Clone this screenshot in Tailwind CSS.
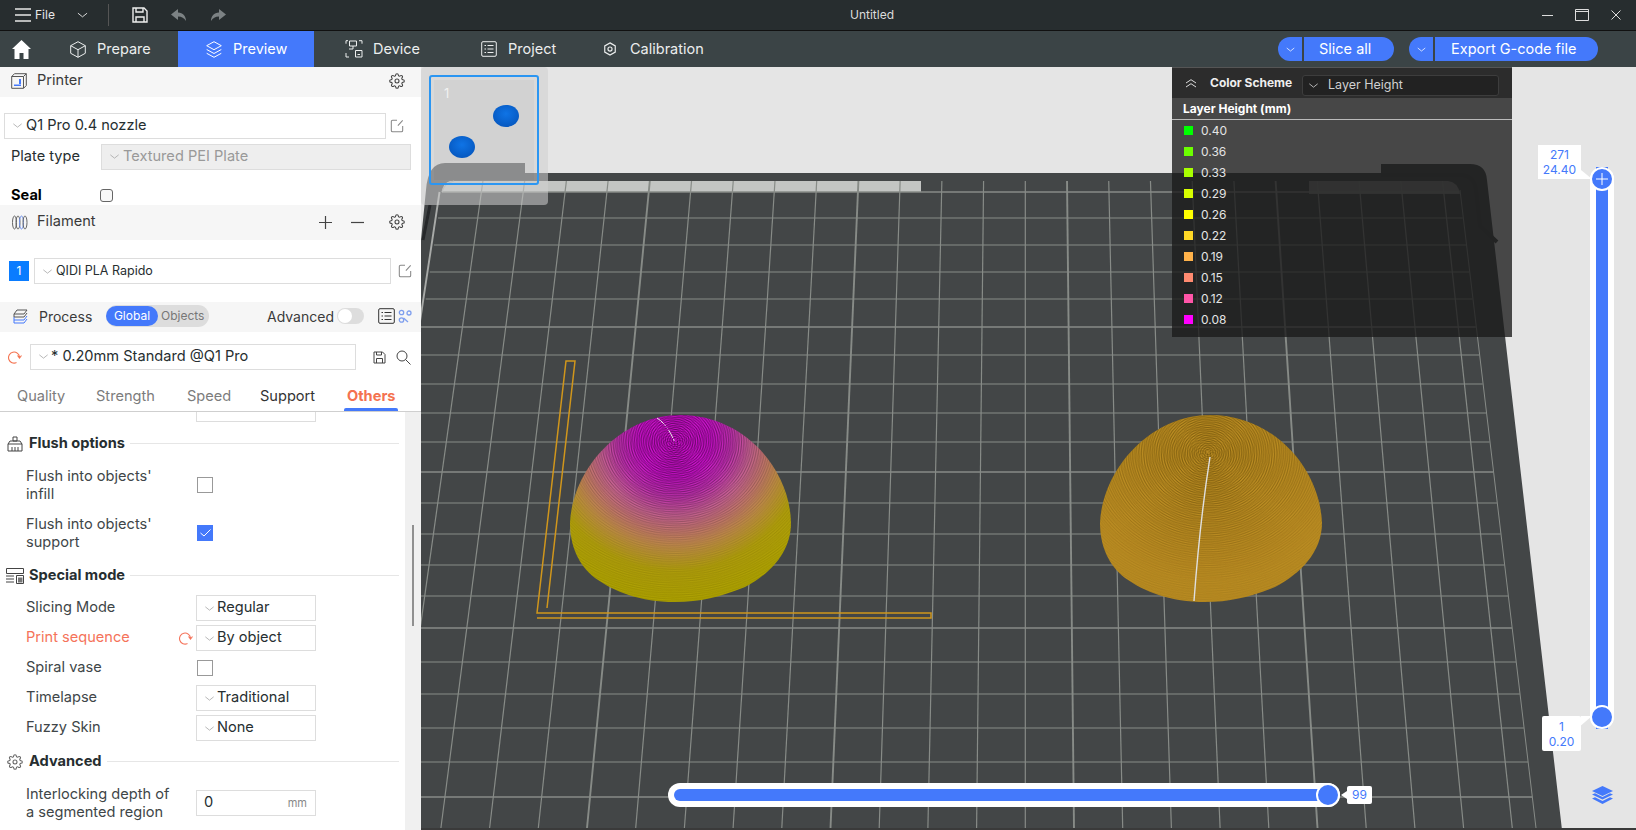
<!DOCTYPE html>
<html lang="en">
<head>
  <meta charset="UTF-8">
  <title>Untitled</title>
  <script src="https://cdn.jsdelivr.net/npm/@tailwindcss/browser@4"></script>
</head>
<body class="w-[1636px] h-[830px] overflow-hidden bg-white [font-family:'Inter',sans-serif]">

  <!-- shared icons -->
  <svg width="0" height="0" class="absolute">
    <symbol id="i-chev" viewBox="0 0 12 6"><path d="M1 1l5 4 5-4" fill="none" stroke="currentColor" stroke-width="1"/></symbol>
    <symbol id="i-edit" viewBox="0 0 16 16"><path d="M8 1.500H3a1.500 1.500 0 0 0-1.500 1.500v10A1.500 1.500 0 0 0 3 14.500h10a1.500 1.500 0 0 0 1.500-1.500V8M9 7.500l5.500-6" fill="none" stroke="currentColor" stroke-width="1.200"/></symbol>
    <symbol id="i-gear" viewBox="0 0 24 24"><g fill="none" stroke="currentColor" stroke-width="1.600"><circle cx="12" cy="12" r="3"/><path d="M19.400 15a1.650 1.650 0 0 0 .33 1.820l.06.06a2 2 0 0 1 0 2.830 2 2 0 0 1-2.830 0l-.06-.06a1.650 1.650 0 0 0-1.820-.33 1.650 1.650 0 0 0-1 1.510V21a2 2 0 0 1-2 2 2 2 0 0 1-2-2v-.09A1.650 1.650 0 0 0 9 19.400a1.650 1.650 0 0 0-1.820.33l-.06.06a2 2 0 0 1-2.830 0 2 2 0 0 1 0-2.830l.06-.06a1.650 1.650 0 0 0 .33-1.820 1.650 1.650 0 0 0-1.510-1H3a2 2 0 0 1-2-2 2 2 0 0 1 2-2h.09A1.650 1.650 0 0 0 4.600 9a1.650 1.650 0 0 0-.33-1.820l-.06-.06a2 2 0 0 1 0-2.830 2 2 0 0 1 2.830 0l.06.06a1.650 1.650 0 0 0 1.820.33H9a1.650 1.650 0 0 0 1-1.510V3a2 2 0 0 1 2-2 2 2 0 0 1 2 2v.09a1.650 1.650 0 0 0 1 1.510 1.650 1.650 0 0 0 1.820-.33l.06-.06a2 2 0 0 1 2.830 0 2 2 0 0 1 0 2.830l-.06.06a1.650 1.650 0 0 0-.33 1.820V9a1.650 1.650 0 0 0 1.510 1H21a2 2 0 0 1 2 2 2 2 0 0 1-2 2h-.09a1.650 1.650 0 0 0-1.510 1z"/></g></symbol>
    <symbol id="i-reset" viewBox="0 0 15 14"><path d="M9.500 12.500A5.500 5.500 0 1 1 12.500 7M10.500 5.500l2 2.500 2-2.500" fill="none" stroke="currentColor" stroke-width="1.100"/></symbol>
  </svg>

  <!-- title bar -->
  <header class="h-[31px] bg-[#272d2f] border-b border-[#111] flex items-center text-[#e8e8e8] relative">
    <svg class="ml-[15px] w-[16px] h-[14px]" viewBox="0 0 16 14"><path d="M0 1h16M0 7h16M0 13h16" stroke="currentColor" stroke-width="1.400"/></svg>
    <span class="ml-[4px] text-[12px]">File</span>
    <svg class="ml-[22px] w-[11px] h-[6px]"><use href="#i-chev"/></svg>
    <div class="ml-[20px] w-px h-[22px] bg-[#555]"></div>
    <svg class="ml-[23px] w-[16px] h-[16px]" viewBox="0 0 16 16"><path d="M1 1h11l3 3v11H1zM4 1v4h7V1M4 15v-5h8v5" fill="none" stroke="#eee" stroke-width="1.400"/></svg>
    <svg class="ml-[23px] w-[16px] h-[13px]" viewBox="0 0 16 13"><path d="M7 0L0 5.500 7 11V7.500c4 0 6 1.500 8 4.500 0-5-3-8-8-8.500z" fill="#7c8284"/></svg>
    <svg class="ml-[23px] w-[16px] h-[13px]" viewBox="0 0 16 13"><path d="M9 0l7 5.500L9 11V7.500c-4 0-6 1.500-8 4.500 0-5 3-8 8-8.500z" fill="#7c8284"/></svg>
    <span class="absolute left-[850px] text-[12px] text-[#dcdcdc]">Untitled</span>
    <div class="ml-auto flex items-center text-[#ddd]">
      <svg class="w-[11px] h-[11px]" viewBox="0 0 11 11"><path d="M0 5.500h11" stroke="currentColor" stroke-width="1"/></svg>
      <svg class="ml-[22px] w-[14px] h-[12px]" viewBox="0 0 14 12"><path d="M.5.500h13v11H.5zM.5 2.500h13" fill="none" stroke="currentColor" stroke-width="1"/></svg>
      <svg class="ml-[22px] mr-[15px] w-[10px] h-[10px]" viewBox="0 0 10 10"><path d="M.5.500l9 9M9.500.500l-9 9" stroke="currentColor" stroke-width="1"/></svg>
    </div>
  </header>

  <!-- top nav -->
  <nav class="h-[36px] bg-[#3b4446] flex items-stretch text-[#eceeee] text-[14.5px]">
    <div class="w-[48px] pl-[12px] flex items-center">
      <svg class="w-[19px] h-[19px]" viewBox="0 0 19 19"><path d="M9.500 0L19 9h-2.500v10h-5v-6h-4v6h-5V9H0z" fill="#fff"/></svg>
    </div>
    <a class="w-[130px] pl-[22px] flex items-center">
      <svg class="w-[16px] h-[17px] mr-[11px]" viewBox="0 0 16 17"><path d="M8 .7l7.300 4v7.600L8 16.300.7 12.300V4.700zM.7 4.700L8 8.700l7.300-4M8 8.700v7.600" fill="none" stroke="currentColor" stroke-width="1"/></svg>Prepare
    </a>
    <a class="w-[136px] pl-[28px] flex items-center bg-[#4479fb] text-white">
      <svg class="w-[16px] h-[17px] mr-[11px]" viewBox="0 0 16 17"><path d="M8 .7l7.300 4L8 8.700.7 4.700zM.7 8.500L8 12.500l7.300-4M.7 12.300L8 16.300l7.300-4" fill="none" stroke="currentColor" stroke-width="1"/></svg>Preview
    </a>
    <a class="w-[136px] pl-[31px] flex items-center">
      <svg class="w-[18px] h-[18px] mr-[10px]" viewBox="0 0 18 18"><path d="M1 .7h2M1 .7v3M14 .7h3v3M1 13v4h3M4.500 1h7v5h-7zM8 6v3M4 9h4M10.500 10.500h6.500v6.500h-6.500zM12.500 14.500h2.500" fill="none" stroke="currentColor" stroke-width="1"/></svg>Device
    </a>
    <a class="w-[138px] pl-[31px] flex items-center">
      <svg class="w-[16px] h-[16px] mr-[11px]" viewBox="0 0 16 16"><path d="M2 .7h12A1.300 1.300 0 0 1 15.300 2v12a1.300 1.300 0 0 1-1.300 1.300H2A1.300 1.300 0 0 1 .7 14V2A1.300 1.300 0 0 1 2 .7zM3.500 4.500h1.500M6.500 4.500h6M3.500 8h1.500M6.500 8h6M3.500 11.500h1.500M6.500 11.500h6" fill="none" stroke="currentColor" stroke-width="1"/></svg>Project
    </a>
    <a class="pl-[15px] flex items-center">
      <svg class="w-[14px] h-[14px] mr-[13px]" viewBox="0 0 24 24"><path d="M12 1.500l9 5.200v10.600l-9 5.200-9-5.200V6.700z" fill="none" stroke="currentColor" stroke-width="2"/><circle cx="12" cy="12" r="3.500" fill="none" stroke="currentColor" stroke-width="2"/></svg>Calibration
    </a>
    <div class="ml-auto mr-[38px] flex items-center text-white">
      <span class="w-[24px] h-[24px] bg-[#4479fb] rounded-l-[12px] flex items-center justify-center"><svg class="w-[9px] h-[5px]"><use href="#i-chev"/></svg></span>
      <span class="ml-[2px] w-[90px] h-[24px] bg-[#4479fb] rounded-r-[12px] flex items-center pl-[15px]">Slice all</span>
      <span class="ml-[15px] w-[24px] h-[24px] bg-[#4479fb] rounded-l-[12px] flex items-center justify-center"><svg class="w-[9px] h-[5px]"><use href="#i-chev"/></svg></span>
      <span class="ml-[2px] w-[163px] h-[24px] bg-[#4479fb] rounded-r-[12px] flex items-center pl-[16px]">Export G-code file</span>
    </div>
  </nav>

  <main class="h-[763px] flex">
    <!-- left panel -->
    <aside class="w-[421px] shrink-0 flex flex-col text-[14.6px] text-[#262e30] bg-white">
      <!-- printer -->
      <div class="h-[30px] pb-[2px] bg-[#f6f6f6] flex items-center pl-[11px] pr-[16px] text-[#3a3a3a]">
        <svg class="w-[16px] h-[16px] mr-[10px]" viewBox="0 0 16 16"><path d="M.7 3.500L3.500.7h11.800v11.800l-2.800 2.800H.7zM.7 3.500h11.800v11.800M12.500 3.500l2.800-2.800" fill="none" stroke="#555" stroke-width="1"/><path d="M3 11.500h7v1.500H3zM8 6h2v5H8z" fill="#4479fb"/></svg>
        Printer
        <svg class="ml-auto w-[16px] h-[16px] text-[#444]"><use href="#i-gear"/></svg>
      </div>
      <div class="h-[108px]">
        <div class="mt-[16px] flex items-center pl-[4px]">
          <div class="w-[382px] h-[26px] pb-[1px] border border-[#ddd] flex items-center pl-[7px]">
            <svg class="w-[11px] h-[5px] mr-[3px] text-[#aaa]"><use href="#i-chev"/></svg>Q1 Pro 0.4 nozzle
          </div>
          <svg class="ml-[4px] w-[14px] h-[14px] text-[#888]"><use href="#i-edit"/></svg>
        </div>
        <div class="mt-[5px] flex items-center pl-[11px]">
          <span class="w-[90px] pb-[1px]">Plate type</span>
          <div class="w-[310px] h-[26px] pb-[1px] bg-[#eeeeee] border border-[#dddddd] flex items-center pl-[7px] text-[#999]">
            <svg class="w-[11px] h-[5px] mr-[3px] text-[#aaa]"><use href="#i-chev"/></svg>Textured PEI Plate
          </div>
        </div>
        <div class="mt-[16px] flex items-center pl-[11px] h-[19px]">
          <b class="w-[89px] font-bold text-black">Seal</b>
          <span class="w-[13px] h-[13px] border border-[#666] rounded-[3px] bg-[#f8f8f8]"></span>
        </div>
      </div>

      <!-- filament -->
      <div class="h-[35px] pb-[1px] bg-[#f6f6f6] flex items-center pl-[12px] pr-[16px] text-[#3a3a3a]">
        <svg class="w-[16px] h-[15px] mr-[9px]" viewBox="0 0 16 15"><g fill="none" stroke-width="1"><ellipse cx="2.500" cy="7.500" rx="2" ry="6.500" stroke="#666"/><ellipse cx="6" cy="7.500" rx="2" ry="6.500" stroke="#666"/><ellipse cx="9.500" cy="7.500" rx="2" ry="6.500" stroke="#6d8fe8"/><ellipse cx="13" cy="7.500" rx="2" ry="6.500" stroke="#666"/></g></svg>
        Filament
        <svg class="ml-auto w-[13px] h-[13px]" viewBox="0 0 13 13"><path d="M6.500 0v13M0 6.500h13" stroke="#444" stroke-width="1.200"/></svg>
        <svg class="ml-[19px] w-[13px] h-[13px]" viewBox="0 0 13 13"><path d="M0 6.500h13" stroke="#444" stroke-width="1.200"/></svg>
        <svg class="ml-[25px] w-[16px] h-[16px] text-[#444]"><use href="#i-gear"/></svg>
      </div>
      <div class="h-[62px] flex items-center pl-[9px]">
        <span class="w-[20px] h-[20px] bg-[#0a7cff] text-white text-[12px] flex items-center justify-center">1</span>
        <div class="ml-[5px] w-[357px] h-[26px] border border-[#ddd] flex items-center pl-[7px] text-[12.5px]">
          <svg class="w-[11px] h-[5px] mr-[3px] text-[#aaa]"><use href="#i-chev"/></svg>QIDI PLA Rapido
        </div>
        <svg class="ml-[7px] w-[14px] h-[14px] text-[#888]"><use href="#i-edit"/></svg>
      </div>

      <!-- process -->
      <div class="h-[30px] pb-[2px] bg-[#f6f6f6] flex items-center pl-[13px] text-[14px] text-[#3a3a3a]">
        <svg class="w-[15px] h-[15px] mr-[11px]" viewBox="0 0 15 15"><path d="M4 1h10l-3 4H1zM1 5v3h10l3-4" fill="none" stroke="#555" stroke-width="1"/><path d="M1 8v3h10l3-4M1 11v3h10l3-4" fill="none" stroke="#4479fb" stroke-width="1"/></svg>
        <span class="w-[52px]">Process</span>
        <div class="ml-[15px] w-[103px] h-[22px] rounded-full bg-[#dddddd] flex items-center text-[12px]">
          <span class="w-[52px] h-[20px] rounded-full bg-[#4479fb] text-white flex items-center justify-center">Global</span>
          <span class="ml-[3px] text-[#777]">Objects</span>
        </div>
        <span class="ml-[58px] w-[67px]">Advanced</span>
        <span class="ml-[3px] w-[27px] h-[16px] rounded-full bg-[#dddddd] flex items-center pl-[1px]"><span class="w-[14px] h-[14px] rounded-full bg-white"></span></span>
        <svg class="ml-[14px] w-[17px] h-[16px]" viewBox="0 0 17 16"><path d="M2 .7h13A1.300 1.300 0 0 1 16.300 2v12a1.300 1.300 0 0 1-1.300 1.300H2A1.300 1.300 0 0 1 .7 14V2A1.300 1.300 0 0 1 2 .7zM3.500 4.500h1.500M6.500 4.500h7M3.500 8h1.500M6.500 8h7M3.500 11.500h1.500M6.500 11.500h7" fill="none" stroke="#333" stroke-width="1"/></svg>
        <svg class="ml-[3px] w-[14px] h-[14px]" viewBox="0 0 14 14"><g fill="none" stroke="#7f9fee" stroke-width="1.300"><circle cx="3.500" cy="3.500" r="2.200"/><circle cx="11" cy="4" r="2"/><circle cx="3.500" cy="11" r="2.200"/><path d="M5.500 9L10 13"/></g></svg>
      </div>
      <div class="h-[42px] pt-[8px] flex items-center pl-[7px]">
        <svg class="w-[15px] h-[14px] text-[#f4724f]"><use href="#i-reset"/></svg>
        <div class="ml-[8px] w-[326px] h-[26px] pb-[1px] border border-[#ddd] flex items-center pl-[7px]">
          <svg class="w-[11px] h-[5px] mr-[2px] text-[#aaa]"><use href="#i-chev"/></svg>* 0.20mm Standard @Q1 Pro
        </div>
        <svg class="ml-[17px] w-[13px] h-[13px]" viewBox="0 0 13 13"><path d="M1 1h8.500L12 3.500V12H1zM3.500 1v3h5V1M3.500 12V7.500h6V12" fill="none" stroke="#444" stroke-width="1"/></svg>
        <svg class="ml-[10px] w-[15px] h-[15px]" viewBox="0 0 15 15"><circle cx="6" cy="6" r="5" fill="none" stroke="#444" stroke-width="1"/><path d="M9.500 9.500L14.500 14.500" stroke="#444" stroke-width="1"/></svg>
      </div>

      <!-- tabs -->
      <div class="h-[38px] pt-[8px] border-b border-[#cfcfcf] flex items-center text-[#7c7c7c] relative">
        <span class="ml-[17px] w-[49px]">Quality</span>
        <span class="ml-[30px] w-[61px]">Strength</span>
        <span class="ml-[30px] w-[43px]">Speed</span>
        <span class="ml-[30px] w-[56px] text-[#333]">Support</span>
        <span class="ml-[31px] font-bold text-[#f4724f]">Others</span>
        <span class="absolute left-[344px] bottom-0 w-[54px] h-[3px] rounded-t-[2px] bg-[#4479fb]"></span>
      </div>

      <!-- settings list -->
      <div class="flex-1 flex overflow-hidden">
        <div class="flex-1 text-[#404648]">
          <div class="ml-[196px] w-[120px] h-[10px] border border-t-0 border-[#ddd]"></div>

          <div class="mt-[10px] h-[24px] pb-[1px] flex items-center pl-[7px] font-bold text-[#262e30]">
            <svg class="w-[16px] h-[16px] mr-[6px]" viewBox="0 0 16 16"><path d="M6 1h4v4H6zM1 8l2-3h10l2 3zM1 8v7h14V8M5 15v-4M8 15v-4M11 15v-4" fill="none" stroke="#444" stroke-width="1"/></svg>
            Flush options<span class="ml-[5px] flex-1 mr-[6px] h-px bg-[#e6e6e6]"></span>
          </div>
          <div class="mt-[11px] grid grid-cols-[196px_120px] items-center">
            <span class="pl-[26px] leading-[18px]">Flush into objects'<br>infill</span>
            <span class="ml-[1px] w-[16px] h-[16px] border border-[#999]"></span>
          </div>
          <div class="mt-[12px] grid grid-cols-[196px_120px] items-center">
            <span class="pl-[26px] leading-[18px]">Flush into objects'<br>support</span>
            <span class="ml-[1px] w-[16px] h-[16px] bg-[#4479fb] flex items-center justify-center"><svg class="w-[11px] h-[8px]" viewBox="0 0 11 8"><path d="M.5 4l3.500 3 6.500-6.500" fill="none" stroke="#fff" stroke-width="1"/></svg></span>
          </div>

          <div class="mt-[13px] h-[24px] pb-[1px] flex items-center pl-[6px] font-bold text-[#262e30]">
            <svg class="w-[18px] h-[16px] mr-[5px]" viewBox="0 0 18 16"><path d="M.5.500h17v5H.5zM10.500 7.500h7v8h-7z" fill="none" stroke="#444" stroke-width="1"/><path d="M12 9.500h4.500v5H12z" fill="#777"/><path d="M0 8h8M0 11h8M0 14h8" stroke="#444" stroke-width="1"/></svg>
            Special mode<span class="ml-[5px] flex-1 mr-[6px] h-px bg-[#e6e6e6]"></span>
          </div>
          <div class="mt-[7px] grid grid-cols-[196px_120px] items-center">
            <span class="pl-[26px]">Slicing Mode</span>
            <div class="h-[26px] border border-[#ddd] flex items-center pl-[7px] text-[#262e30]"><svg class="w-[11px] h-[5px] mr-[2px] text-[#aaa]"><use href="#i-chev"/></svg>Regular</div>
          </div>
          <div class="mt-[4px] grid grid-cols-[196px_120px] items-center">
            <span class="pl-[26px] pr-[3px] flex items-center justify-between text-[#f5735a]">Print sequence<svg class="w-[15px] h-[14px]"><use href="#i-reset"/></svg></span>
            <div class="h-[26px] border border-[#ddd] flex items-center pl-[7px] text-[#262e30]"><svg class="w-[11px] h-[5px] mr-[2px] text-[#aaa]"><use href="#i-chev"/></svg>By object</div>
          </div>
          <div class="mt-[4px] h-[26px] grid grid-cols-[196px_120px] items-center">
            <span class="pl-[26px]">Spiral vase</span>
            <span class="ml-[1px] w-[16px] h-[16px] border border-[#999]"></span>
          </div>
          <div class="mt-[4px] grid grid-cols-[196px_120px] items-center">
            <span class="pl-[26px]">Timelapse</span>
            <div class="h-[26px] border border-[#ddd] flex items-center pl-[7px] text-[#262e30]"><svg class="w-[11px] h-[5px] mr-[2px] text-[#aaa]"><use href="#i-chev"/></svg>Traditional</div>
          </div>
          <div class="mt-[4px] grid grid-cols-[196px_120px] items-center">
            <span class="pl-[26px]">Fuzzy Skin</span>
            <div class="h-[26px] border border-[#ddd] flex items-center pl-[7px] text-[#262e30]"><svg class="w-[11px] h-[5px] mr-[2px] text-[#aaa]"><use href="#i-chev"/></svg>None</div>
          </div>

          <div class="mt-[9px] h-[24px] pb-[1px] flex items-center pl-[7px] font-bold text-[#262e30]">
            <svg class="w-[16px] h-[16px] mr-[6px] text-[#666]" viewBox="0 0 24 24"><use href="#i-gear"/></svg>
            Advanced<span class="ml-[5px] flex-1 mr-[6px] h-px bg-[#e6e6e6]"></span>
          </div>
          <div class="mt-[11px] grid grid-cols-[196px_120px] items-center">
            <span class="pl-[26px] leading-[18px]">Interlocking depth of<br>a segmented region</span>
            <div class="h-[26px] border border-[#ddd] flex items-center px-[7px] text-[#262e30]">0<span class="ml-auto mr-[1px] text-[11px] text-[#888]">mm</span></div>
          </div>
        </div>
        <!-- scrollbar -->
        <div class="w-[16px] bg-[#f0f0f0] pt-[113px] pl-[7px]">
          <div class="w-[2px] h-[101px] bg-[#909090]"></div>
        </div>
      </div>
    </aside>

    <!-- 3d view -->
    <section class="relative flex-1 bg-[#e5e5e5] overflow-hidden">
      <svg id="scene" class="absolute inset-0 w-full h-full" viewBox="421 67 1215 763">
        <defs>
          <radialGradient id="dome-left" gradientUnits="userSpaceOnUse" cx="675" cy="440" r="168">
            <stop offset="0" stop-color="#cc0ecc"/>
            <stop offset=".22" stop-color="#c812c8"/>
            <stop offset=".33" stop-color="#c030b0"/>
            <stop offset=".45" stop-color="#c46090"/>
            <stop offset=".65" stop-color="#b98a40"/>
            <stop offset=".78" stop-color="#ae9c0c"/>
            <stop offset="1" stop-color="#ada200"/>
          </radialGradient>
          <radialGradient id="thumb-dome" cx=".5" cy=".4" r=".6">
            <stop offset="0" stop-color="#0f74e6"/>
            <stop offset="1" stop-color="#0658c0"/>
          </radialGradient>
          <path id="shape-left" d="M570 523C572 470 620 415 680 415C745 415 790 470 791 523C791 552 770 574 745 587C720 597 700 602 675 602C640 602 615 592 595 578C578 565 570 545 570 523Z"/>
          <path id="shape-right" d="M1100 523C1102 470 1150 415 1210 415C1275 415 1320 470 1322 523C1322 552 1300 574 1275 587C1250 597 1230 602 1205 602C1170 602 1145 592 1125 578C1108 565 1100 545 1100 523Z"/>
          <clipPath id="clip-left"><use href="#shape-left"/></clipPath>
          <clipPath id="clip-right"><use href="#shape-right"/></clipPath>
        </defs>

        <!-- bed -->
        <path d="M421 830V240L426 190Q428 163 445 163H525V173H1381V164H1470Q1486 164 1487 180L1562 830Z" fill="#434647"/>
        <path d="M430 205L423 240" stroke="#26282a" stroke-width="3"/>
        <path d="M1381 175H1462Q1474 176 1476 190L1480 226L1497 242" fill="none" stroke="#3d3f40" stroke-width="4"/>
        <path d="M450 181H921V192H442Q443 183 450 181Z" fill="#c3c5c3"/>
        <path d="M1309 181H1448Q1458 182 1460 194H1309Z" fill="#7e807e"/>
        <g id="grid"></g>

        <!-- wipe tower outline -->
        <path d="M547 608L575 361H566L537 613H931V618H537" fill="none" stroke="#d0961c" stroke-width="1.500"/>

        <!-- objects -->
        <use href="#shape-left" fill="url(#dome-left)"/>
        <g id="rings-left" clip-path="url(#clip-left)"></g>
        <path d="M657 418Q668 425 675 443" fill="none" stroke="#eee" stroke-width="1" stroke-dasharray="9 1 2 2 1 2"/>

        <use href="#shape-right" fill="#b98b22"/>
        <g id="rings-right" clip-path="url(#clip-right)"></g>
        <path d="M1210 457Q1200 520 1194 601" fill="none" stroke="#dfdfdf" stroke-width="1.400"/>

        <!-- slider pointers -->
        <path d="M1581 170L1592 179H1578Z" fill="#fff"/>
        <path d="M1581 716L1592 716L1578 728Z" fill="#fff"/>
        <path d="M1347 791L1341 795L1347 799Z" fill="#fff"/>
      </svg>

      <!-- plate thumbnail -->
      <div class="absolute left-0 top-0 w-[127px] h-[138px] bg-[#cfcfcf]/55 rounded-[4px]">
        <div class="absolute left-[8px] top-[8px] w-[110px] h-[110px] border-2 border-[#2b96f2] rounded-[3px] p-[3px]">
          <div class="relative w-full h-full bg-black/3 text-white/70 text-[13px] pl-[10px] pt-[4px]">1
            <svg class="absolute left-0 top-0 w-full h-full" viewBox="0 0 100 100">
              <path d="M59 36C59 30 64 25 72 25S85 30 85 36C85 42 79 47 72 47S59 42 59 36Z" fill="url(#thumb-dome)"/>
              <path d="M15 67C15 61 20 56 28 56S41 61 41 67C41 73 35 78 28 78S15 73 15 67Z" fill="url(#thumb-dome)"/>
            </svg>
          </div>
        </div>
      </div>

      <!-- legend -->
      <div class="absolute left-[751px] top-0 w-[340px] h-[270px] bg-[#1b1b1b]/78 text-[12px] text-[#e4e4e4] border-t border-[#555]">
        <div class="h-[30px] bg-[#2c2c2c] flex items-center pl-[13px]">
          <svg class="w-[12px] h-[9px]" viewBox="0 0 12 9"><path d="M1 4L6 .7l5 3.300M1 8L6 4.700l5 3.300" fill="none" stroke="#ddd" stroke-width="1"/></svg>
          <b class="ml-[13px] w-[83px] font-bold text-[#eee] whitespace-nowrap">Color Scheme</b>
          <div class="ml-[9px] w-[197px] h-[21px] mt-[5px] bg-[#222222] border border-[#3d3d3d] rounded-[3px] flex items-center pl-[5px] text-[12.5px] text-[#d0d0d0]">
            <svg class="w-[11px] h-[5px] mr-[9px]"><use href="#i-chev"/></svg>Layer Height
          </div>
        </div>
        <div class="h-[22px] border-b border-[#bbbbbb] pl-[11px] flex items-center font-bold text-white">Layer Height (mm)</div>
        <ul>
          <li class="h-[21px] flex items-center pl-[12px]"><span class="w-[9px] h-[9px] mr-[8px] bg-[#00ff00]"></span>0.40</li>
          <li class="h-[21px] flex items-center pl-[12px]"><span class="w-[9px] h-[9px] mr-[8px] bg-[#6cff00]"></span>0.36</li>
          <li class="h-[21px] flex items-center pl-[12px]"><span class="w-[9px] h-[9px] mr-[8px] bg-[#a8ff00]"></span>0.33</li>
          <li class="h-[21px] flex items-center pl-[12px]"><span class="w-[9px] h-[9px] mr-[8px] bg-[#d8ff00]"></span>0.29</li>
          <li class="h-[21px] flex items-center pl-[12px]"><span class="w-[9px] h-[9px] mr-[8px] bg-[#ffff00]"></span>0.26</li>
          <li class="h-[21px] flex items-center pl-[12px]"><span class="w-[9px] h-[9px] mr-[8px] bg-[#ffd826]"></span>0.22</li>
          <li class="h-[21px] flex items-center pl-[12px]"><span class="w-[9px] h-[9px] mr-[8px] bg-[#ffb24a]"></span>0.19</li>
          <li class="h-[21px] flex items-center pl-[12px]"><span class="w-[9px] h-[9px] mr-[8px] bg-[#ff8a70]"></span>0.15</li>
          <li class="h-[21px] flex items-center pl-[12px]"><span class="w-[9px] h-[9px] mr-[8px] bg-[#ff55a8]"></span>0.12</li>
          <li class="h-[21px] flex items-center pl-[12px]"><span class="w-[9px] h-[9px] mr-[8px] bg-[#ff00ff]"></span>0.08</li>
        </ul>
      </div>

      <!-- layer slider -->
      <div class="absolute left-[1117px] top-[78px] w-[43px] h-[34px] bg-white text-[#4479fb] text-[12px] leading-[15px] flex flex-col items-center justify-center">
        <span>271</span><span>24.40</span>
      </div>
      <div class="absolute left-[1169px] top-[100px] w-[24px] h-[562px] bg-white rounded-full flex justify-center">
        <div class="w-[12px] h-full bg-[#4479fb]"></div>
        <span class="absolute top-0 left-0 w-[24px] h-[24px] rounded-full bg-[#4479fb] border-2 border-white flex items-center justify-center">
          <svg class="w-[12px] h-[12px]" viewBox="0 0 12 12"><path d="M6 0v12M0 6h12" stroke="#fff" stroke-width="1"/></svg>
        </span>
        <span class="absolute bottom-0 left-0 w-[24px] h-[24px] rounded-full bg-[#4479fb] border-2 border-white"></span>
      </div>
      <div class="absolute left-[1121px] top-[649px] w-[39px] h-[35px] bg-white text-[#4479fb] text-[12px] leading-[15px] rounded-[2px] flex flex-col items-center justify-center">
        <span>1</span><span>0.20</span>
      </div>
      <svg class="absolute left-[1171px] top-[719px] w-[21px] h-[18px]" viewBox="0 0 21 18"><path d="M10.500 0L21 5l-10.500 5L0 5z" fill="#4479fb"/><path d="M0 8.500l3-1.200 7.500 3.600 7.500-3.600 3 1.200-10.500 5z" fill="#4479fb"/><path d="M0 12.500l3-1.200 7.500 3.600 7.500-3.600 3 1.200L10.500 18z" fill="#4479fb"/></svg>

      <!-- move slider -->
      <div class="absolute left-[247px] top-[716px] w-[672px] h-[24px] bg-white rounded-full flex items-center pl-[6px] pr-[6px]">
        <div class="w-full h-[12px] bg-[#4479fb] rounded-l-[6px]"></div>
        <span class="absolute right-0 top-0 w-[24px] h-[24px] rounded-full bg-[#4479fb] border-2 border-white"></span>
      </div>
      <div class="absolute left-[926px] top-[719px] w-[25px] h-[18px] bg-white rounded-[2px] text-[#4479fb] text-[12px] flex items-center justify-center">99</div>
    </section>
  </main>

  <script>
    // build bed grid and the layer rings of the two objects
    const NS = 'http://www.w3.org/2000/svg';
    const add = (parent, tag, attrs) => {
      const el = document.createElementNS(NS, tag);
      for (const k in attrs) el.setAttribute(k, attrs[k]);
      parent.appendChild(el);
    };
    const grid = document.getElementById('grid');
    const lineColor = '#878b87';
    const rightEdge = y => 1460 + (y - 195) * 0.12;
    const rows = [179, 192, 218, 245, 272, 299, 327, 355, 384, 413, 442, 472, 503, 534, 565, 596, 628, 662, 694, 728, 762, 797];
    rows.forEach((y, i) => {
      if (y < 192) return;
      add(grid, 'line', { x1: y < 327 ? 442 - (y - 192) * 0.1525 : 421, y1: y, x2: rightEdge(y), y2: y, stroke: lineColor, 'stroke-width': (i - 1) % 5 === 0 ? 1.7 : 1.2 });
    });
    for (let k = -15; k <= 9; k++) {
      const top = 1067 + 41.7 * k, bottom = 1074 + 48.7 * k;
      const y1 = k === -15 ? 192 : 181;
      const x1 = top + (bottom - top) * (y1 - 179) / 649;
      add(grid, 'line', { x1, y1, x2: bottom, y2: 828, stroke: k === -15 ? '#a8aaa8' : lineColor, 'stroke-width': k % 5 === 0 ? 1.9 : 1.2 });
    }
    add(grid, 'line', { x1: 1460, y1: 190, x2: 1536, y2: 828, stroke: lineColor, 'stroke-width': 1 });
    add(grid, 'path', { d: 'M442 192Q444 183 454 181', fill: 'none', stroke: '#a8aaa8', 'stroke-width': 1.2 });
    add(grid, 'rect', { x: 421, y: 828, width: 1215, height: 2, fill: '#3a3a3a' });

    // two slightly offset ring sets give the moire the sliced layers show
    const rings = (id, cx, cy, color, fade) => {
      const g = document.getElementById(id);
      [[0, 0], [5, 3], [-6, 4]].forEach(([dx, dy], n) => {
        for (let r = 3; r < 200; r += 2.2 + n * 0.35) {
          const o = Math.max(0.06, 0.42 * (1 - r / fade)) / (n ? 1.5 : 1);
          add(g, 'ellipse', { cx: cx + dx, cy: cy + dy, rx: r, ry: r * 0.9, fill: 'none', stroke: color, 'stroke-opacity': o.toFixed(3), 'stroke-width': .8 });
        }
      });
    };
    rings('rings-left', 675, 440, '#000', 130);
    rings('rings-right', 1208, 452, '#4f3a05', 165);
  </script>
</body>
</html>
